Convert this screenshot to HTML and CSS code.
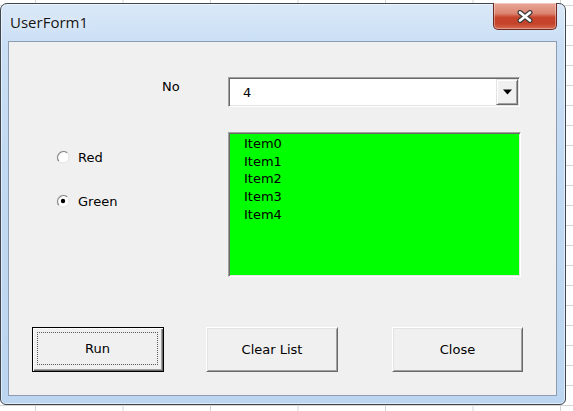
FILE: index.html
```html
<!DOCTYPE html>
<html lang="en">
<head>
    <meta charset="UTF-8">
    <meta name="viewport" content="width=device-width, initial-scale=1.0">
    <title>UserForm1</title>
    <link rel="stylesheet" href="styles.css">
</head>

<body>
<div class="window">
    <div class="titlebar">
        <span class="title">UserForm1</span>
        <button class="close-btn" aria-label="Close">
            <svg width="16" height="13" viewBox="0 0 16 13">
                <path d="M3 2.5 L13 10.5 M13 2.5 L3 10.5" stroke="#3b3b3b" stroke-width="5" stroke-linecap="round"/>
                <path d="M3 2.5 L13 10.5 M13 2.5 L3 10.5" stroke="#fff" stroke-width="2.6" stroke-linecap="round"/>
            </svg>
        </button>
    </div>

    <div class="client">
        <div class="field-row">
            <label class="field-label" for="numberBox">No</label>
            <div class="combo" id="numberBox">
                <span class="combo-value">4</span>
                <span class="combo-arrow">
                    <svg width="9" height="6" viewBox="0 0 9 6"><polygon points="0,0.5 9,0.5 4.5,5.5" fill="#000"/></svg>
                </span>
            </div>
        </div>

        <div class="middle">
            <div class="options">
                <label class="option">
                    <svg class="radio" width="14" height="14" viewBox="0 0 14 14">
                        <circle cx="7" cy="7" r="6" fill="#fff" stroke="#e3e3e3"/>
                        <path d="M2.8 11.2 A6 6 0 0 1 11.2 2.8" fill="none" stroke="#8a8a8a" stroke-width="1.3"/>
                    </svg>
                    Red
                </label>
                <label class="option">
                    <svg class="radio" width="14" height="14" viewBox="0 0 14 14">
                        <circle cx="7" cy="7" r="6" fill="#fff" stroke="#e3e3e3"/>
                        <path d="M2.8 11.2 A6 6 0 0 1 11.2 2.8" fill="none" stroke="#8a8a8a" stroke-width="1.3"/>
                        <circle cx="7" cy="7" r="2.2" fill="#000"/>
                    </svg>
                    Green
                </label>
            </div>
            <ul class="listbox">
                <li>Item0</li>
                <li>Item1</li>
                <li>Item2</li>
                <li>Item3</li>
                <li>Item4</li>
            </ul>
        </div>

        <div class="buttons">
            <button class="btn btn-run"><span class="focus">Run</span></button>
            <button class="btn btn-clear">Clear List</button>
            <button class="btn btn-close">Close</button>
        </div>
    </div>
</div>
</body>
</html>
```

FILE: styles.css
```css
body {
    margin: 0;
    width: 573px;
    height: 411px;
    overflow: hidden;
    font-family: 'DejaVu Sans', Verdana, sans-serif;
    font-size: 13px;
    color: #000;
    background-color: #fff;
    background-image:
        linear-gradient(to right, #d4d4d4 1px, transparent 1px),
        linear-gradient(to bottom, #d4d4d4 1px, transparent 1px);
    background-size: 87.5px 20px, 87.5px 20px;
    background-position: 35px 0, 0 5px;
}

.window {
    box-sizing: border-box;
    width: 566px;
    height: 402px;
    margin-top: 3px;
    border: 1px solid #3f4650;
    border-radius: 7px 7px 6px 6px;
    background: linear-gradient(180deg, #dae8f8 0%, #cadff5 10%, #c1d9f2 40%, #bcd5f0 100%);
    box-shadow: inset 0 0 0 1px rgba(255, 255, 255, 0.55);
    display: flex;
    flex-direction: column;
}

.titlebar {
    height: 37px;
    flex: none;
    display: flex;
    align-items: flex-start;
    padding: 0 8px 0 9px;
}

.title {
    font-family: 'Open Sans', 'Noto Sans', sans-serif;
    font-size: 15px;
    line-height: 20px;
    padding-top: 8px;
    color: #151515;
    text-shadow: 0 0 6px rgba(255, 255, 255, 0.9);
}

.close-btn {
    margin-left: auto;
    margin-top: -1px;
    width: 64px;
    height: 27px;
    padding: 0;
    border: 1px solid #6e2a22;
    border-top: none;
    border-radius: 0 0 5px 5px;
    background: linear-gradient(180deg, #e9a899 0%, #dc8471 40%, #c8452d 55%, #c6432b 80%, #d56a4f 100%);
    box-shadow: inset 0 0 0 1px rgba(255, 255, 255, 0.35);
    display: flex;
    align-items: center;
    justify-content: center;
}

.client {
    box-sizing: border-box;
    flex: none;
    height: 355px;
    margin: 0 8px 0 7px;
    border: 1px solid #8d9cb0;
    background-color: #f0f0f0;
    padding-top: 35px;
}

.field-row {
    display: flex;
    align-items: flex-start;
}

.field-label {
    box-sizing: border-box;
    width: 219px;
    padding-left: 153px;
    line-height: 20px;
}

.combo {
    box-sizing: border-box;
    width: 292px;
    height: 30px;
    display: flex;
    align-items: stretch;
    background-color: #fff;
    border: 1px solid;
    border-color: #a0a0a0 #fff #fff #a0a0a0;
    box-shadow: inset 1px 1px 0 #696969, inset -1px -1px 0 #e3e3e3;
    padding: 1px;
}

.combo-value {
    flex: 1;
    display: flex;
    align-items: center;
    padding-left: 13px;
}

.combo-arrow {
    box-sizing: border-box;
    width: 22px;
    display: flex;
    align-items: center;
    justify-content: center;
    background-color: #f0f0f0;
    border: 1px solid;
    border-color: #e3e3e3 #696969 #696969 #e3e3e3;
    box-shadow: inset 1px 1px 0 #fff, inset -1px -1px 0 #a0a0a0;
}

.middle {
    display: flex;
    margin-top: 25px;
}

.options {
    box-sizing: border-box;
    width: 219px;
    padding: 15px 0 0 47px;
    display: flex;
    flex-direction: column;
    gap: 24px;
}

.option {
    display: flex;
    align-items: center;
    gap: 8px;
    height: 20px;
}

.listbox {
    box-sizing: border-box;
    width: 293px;
    height: 145px;
    margin: 0;
    padding: 2px 0 0 13px;
    list-style: none;
    background-color: #00ff00;
    border: 1px solid;
    border-color: #a0a0a0 #fff #fff #a0a0a0;
    box-shadow: inset 1px 1px 0 #696969, inset -1px -1px 0 #e3e3e3;
}

.listbox li {
    line-height: 17.7px;
    padding-left: 2px;
}

.buttons {
    display: flex;
    margin-top: 50px;
    padding-left: 23px;
}

.btn {
    box-sizing: border-box;
    height: 45px;
    padding: 0;
    font-family: 'DejaVu Sans', Verdana, sans-serif;
    font-size: 13px;
    color: #000;
    background-color: #f0f0f0;
    border: 1px solid;
    border-color: #fff #696969 #696969 #fff;
    box-shadow: inset 1px 1px 0 #e3e3e3, inset -1px -1px 0 #a0a0a0;
}

.btn-run {
    width: 132px;
    border: 1px solid #000;
    box-shadow: inset 1px 1px 0 #fff, inset -1px -1px 0 #696969, inset -2px -2px 0 #a0a0a0;
    padding: 4px 5px 6px 4px;
    display: flex;
}

.focus {
    flex: 1;
    display: flex;
    align-items: center;
    justify-content: center;
    border: 1px dotted #5a5a5a;
}

.btn-clear {
    width: 132px;
    margin-left: 42px;
}

.btn-close {
    width: 131px;
    margin-left: 54px;
}
```
